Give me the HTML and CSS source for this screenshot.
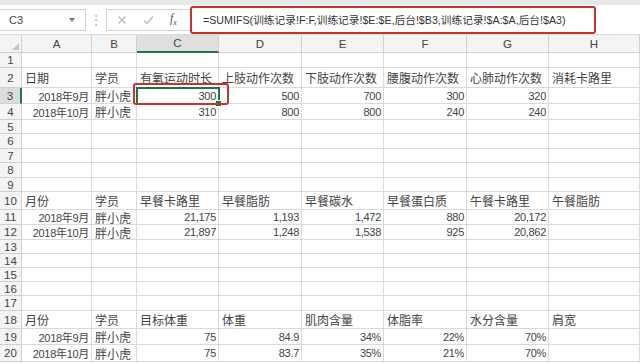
FILE: index.html
```html
<!DOCTYPE html>
<html lang="zh-CN">
<head>
    <meta charset="UTF-8">
    <meta name="viewport" content="width=device-width, initial-scale=1.0">
    <title>训练记录汇总</title>
    <link rel="stylesheet" href="styles.css">
</head>
<body>
    <div class="excel">
        <div class="top-strip"></div>
        <div class="formula-bar">
            <div class="name-box"><span>C3</span><span class="arrow"></span></div>
            <div class="bar-sep">⋮</div>
            <div class="fx-tools">
                <svg class="tool-icon" width="10" height="10" viewBox="0 0 10 10"><path d="M1.5 1.5 L8.5 8.5 M8.5 1.5 L1.5 8.5" stroke="#b9b9b9" stroke-width="1.2" fill="none"/></svg>
                <svg class="tool-icon" width="11" height="10" viewBox="0 0 11 10"><path d="M1 5.5 L4 8.5 L10 1.5" stroke="#b9b9b9" stroke-width="1.2" fill="none"/></svg>
                <span class="fx">f<sub>x</sub></span>
            </div>
            <div class="formula-input">=SUMIFS(训练记录!F:F,训练记录!$E:$E,后台!$B3,训练记录!$A:$A,后台!$A3)</div>
        </div>
        <div class="sheet-wrap">
            <div class="sheet" id="sheet"></div>
            <div class="active-cell"><span class="fill-handle"></span></div>
            <div class="mark"></div>
        </div>
    </div>
    <script>
        // 表格数据 (行号 -> A..H)
        const cols = ['A', 'B', 'C', 'D', 'E', 'F', 'G', 'H'];
        const data = {
            2: ['日期', '学员', '有氧运动时长', '上肢动作次数', '下肢动作次数', '腰腹动作次数', '心肺动作次数', '消耗卡路里'],
            3: ['2018年9月', '胖小虎', '300', '500', '700', '300', '320', ''],
            4: ['2018年10月', '胖小虎', '310', '800', '800', '240', '240', ''],
            10: ['月份', '学员', '早餐卡路里', '早餐脂肪', '早餐碳水', '早餐蛋白质', '午餐卡路里', '午餐脂肪'],
            11: ['2018年9月', '胖小虎', '21,175', '1,193', '1,472', '880', '20,172', ''],
            12: ['2018年10月', '胖小虎', '21,897', '1,248', '1,538', '925', '20,862', ''],
            18: ['月份', '学员', '目标体重', '体重', '肌肉含量', '体脂率', '水分含量', '肩宽'],
            19: ['2018年9月', '胖小虎', '75', '84.9', '34%', '22%', '70%', ''],
            20: ['2018年10月', '胖小虎', '75', '83.7', '35%', '21%', '70%', '']
        };
        function renderSheet() {
            let html = '<div class="corner"></div>';
            html += cols.map(c => `<div class="col-head${c === 'C' ? ' sel' : ''}">${c}</div>`).join('');
            for (let r = 1; r <= 20; r++) {
                html += `<div class="row-head${r === 3 ? ' sel' : ''}">${r}</div>`;
                const row = data[r] || [];
                cols.forEach((c, i) => {
                    const v = row[i] || '';
                    const isNum = /^\d/.test(v);
                    html += `<div class="cell${isNum ? ' num' : ''}">${v}</div>`;
                });
            }
            document.getElementById('sheet').innerHTML = html;
        }
        renderSheet();
    </script>
</body>
</html>
```

FILE: styles.css
```css
body {
    margin: 0;
    background: #fff;
    font-family: "Liberation Sans", "Noto Sans CJK SC", sans-serif;
    color: #333;
}
.excel {
    width: 640px;
    height: 364px;
    overflow: hidden;
}
.top-strip {
    height: 5px;
    background: #e7e7e7;
}
.formula-bar {
    height: 30px;
    display: flex;
    align-items: center;
    background: #fff;
    border-bottom: 1px solid #d9d9d9;
    box-sizing: border-box;
}
.name-box {
    width: 86px;
    height: 22px;
    box-sizing: border-box;
    border: 1px solid #d2d2d2;
    border-left: none;
    display: flex;
    align-items: center;
    justify-content: space-between;
    padding: 0 10px 0 9px;
    font-size: 11px;
    color: #444;
}
.arrow {
    width: 0;
    height: 0;
    border-left: 3px solid transparent;
    border-right: 3px solid transparent;
    border-top: 4px solid #777;
}
.bar-sep {
    width: 20px;
    text-align: center;
    color: #b0b0b0;
    font-size: 12px;
}
.fx-tools {
    width: 84px;
    height: 22px;
    box-sizing: border-box;
    border: 1px solid #d6d6d6;
    border-right: none;
    display: flex;
    align-items: center;
    padding-left: 10px;
    gap: 16px;
}
.fx {
    font-family: "Liberation Serif", serif;
    font-style: italic;
    font-size: 12px;
    color: #555;
}
.fx sub {
    font-size: 8px;
}
.formula-input {
    width: 406px;
    height: 28px;
    box-sizing: border-box;
    border: 2px solid #c8322d;
    border-radius: 3px;
    display: flex;
    align-items: center;
    padding-left: 11px;
    font-size: 10.7px;
    color: #333;
    white-space: nowrap;
}
.sheet-wrap {
    position: relative;
}
.sheet {
    display: grid;
    grid-template-columns: 22px 70px 45px 82px 83px 82px 83px 82px 91px;
    grid-template-rows: 18px 15px 20px 16px 16px 14px 15px 14px 15px 14px 18px 15px 15px 14px 14px 14px 14px 15px 18px 16px 17px;
}
.cell, .col-head, .row-head, .corner {
    box-sizing: border-box;
    border-right: 1px solid #dadada;
    border-bottom: 1px solid #dadada;
    display: flex;
    align-items: center;
    white-space: nowrap;
    min-width: 0;
}
.cell {
    padding: 0 3px;
    font-size: 12px;
    color: #444;
}
.cell.num {
    justify-content: flex-end;
    font-size: 11px;
    letter-spacing: -0.3px;
    padding-right: 2px;
}
.corner {
    position: relative;
    background: #f4f4f4;
    border-color: #d0d0d0;
}
.corner::after {
    content: "";
    position: absolute;
    right: 2px;
    bottom: 2px;
    border-left: 7px solid transparent;
    border-bottom: 7px solid #c6c6c6;
}
.col-head {
    background: #f4f4f4;
    justify-content: center;
    font-size: 11.5px;
    color: #444;
    border-color: #d0d0d0;
}
.col-head.sel {
    background: #dfdfdf;
    border-bottom: 2px solid #217346;
}
.row-head {
    background: #f4f4f4;
    justify-content: center;
    font-size: 11.5px;
    color: #444;
    border-color: #d0d0d0;
}
.row-head.sel {
    background: #dcdcdc;
    border-right: 2px solid #217346;
}
.active-cell {
    position: absolute;
    left: 136px;
    top: 52px;
    width: 84px;
    height: 18px;
    box-sizing: border-box;
    border: 2px solid #217346;
}
.fill-handle {
    position: absolute;
    right: -4px;
    bottom: -4px;
    width: 5px;
    height: 5px;
    background: #217346;
    border: 1px solid #fff;
}
.mark {
    position: absolute;
    left: 133px;
    top: 48px;
    width: 96px;
    height: 22px;
    box-sizing: border-box;
    border: 2px solid #c8322d;
    border-radius: 3px;
}
```
